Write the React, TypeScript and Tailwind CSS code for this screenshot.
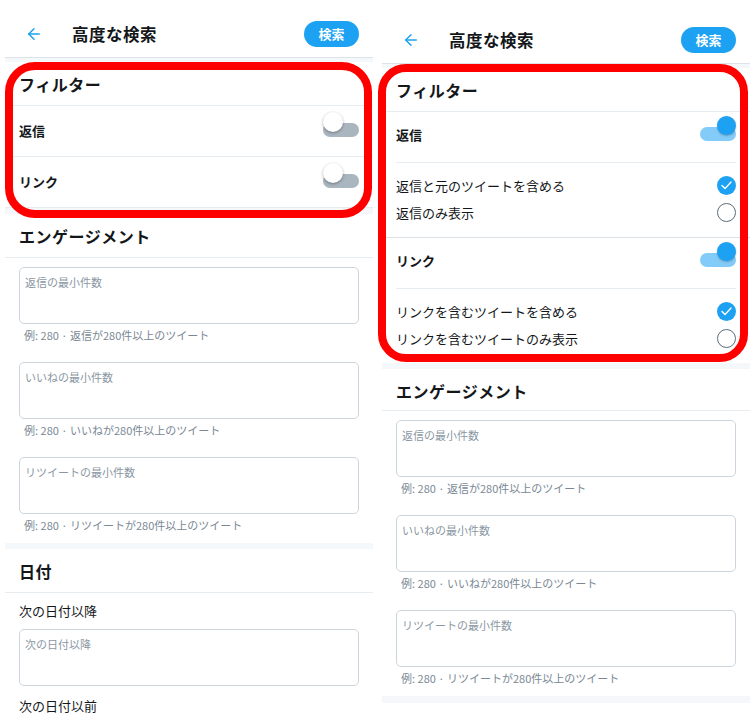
import { ArrowLeft } from "lucide-react"

// Twitter mobile "advanced search" — two states side by side, with red highlight frames

function Header({ top }: { top: string }) {
  return (
    <div className={`${top} border-b border-[#dde3e8]`}>
      <div className="h-[46px] flex items-center px-[14px]">
        <ArrowLeft className="w-[18px] h-[18px] text-[#1da1f2] ml-[6px]" strokeWidth={2} />
        <div className="ml-[29px] text-[16.5px] font-bold text-[#14171a] tracking-[0.5px]">高度な検索</div>
        <button className="ml-auto w-[55px] h-[26px] rounded-full bg-[#1da1f2] text-white text-[13px] font-bold">
          検索
        </button>
      </div>
    </div>
  )
}

function Band({ h = "h-[6px]" }: { h?: string }) {
  return <div className={`${h} bg-[#f5f8fa]`} />
}

function SectionTitle({ children, cls = "h-[44px]" }: { children: React.ReactNode; cls?: string }) {
  return (
    <div className={`${cls} flex items-center px-[14px] border-b border-[#e6ecf0] text-[16px] font-bold text-[#14171a] tracking-[0.5px]`}>
      {children}
    </div>
  )
}

function Toggle({ on }: { on: boolean }) {
  return (
    <div className="relative w-[36px] h-[25px] mb-[14px]">
      <div className={`absolute left-0 right-0 bottom-0 h-[14px] rounded-full ${on ? "bg-[#83cbf8]" : "bg-[#a9b5bf]"}`} />
      {on ? (
        <div className="absolute right-0 top-0 w-[19px] h-[19px] rounded-full bg-[#1da1f2] shadow-[0_1px_2px_rgba(0,0,0,0.25)]" />
      ) : (
        <div className="absolute left-0 top-0 w-[20px] h-[20px] rounded-full bg-white shadow-[0_1px_3px_rgba(0,0,0,0.35)]" />
      )}
    </div>
  )
}

function ToggleRow({ label, on, indent }: { label: string; on: boolean; indent?: boolean }) {
  if (indent) {
    return (
      <div className="h-[51px] px-[14px]">
        <div className="h-full pb-[4px] flex items-center justify-between border-b border-[#e6ecf0]">
          <span className="text-[13px] font-semibold text-[#14171a]">{label}</span>
          <Toggle on={on} />
        </div>
      </div>
    )
  }
  return (
    <div className="h-[51px] flex items-center justify-between px-[14px] border-b border-[#e6ecf0]">
      <span className="text-[13px] font-semibold text-[#14171a]">{label}</span>
      <Toggle on={on} />
    </div>
  )
}

function Radio({ checked }: { checked: boolean }) {
  if (checked) {
    return (
      <div className="w-[19px] h-[19px] rounded-full bg-[#1da1f2] flex items-center justify-center">
        <svg width="11" height="9" viewBox="0 0 11 9" fill="none">
          <path d="M1 4.6 L4 7.6 L10 1" stroke="white" strokeWidth="1.4" strokeLinecap="round" strokeLinejoin="round" />
        </svg>
      </div>
    )
  }
  return <div className="w-[19px] h-[19px] rounded-full border-[1.5px] border-[#5b6b78]" />
}

function Options({ items, border }: { items: [string, boolean][]; border?: boolean }) {
  return (
    <div className={`pt-[9px] pb-[11px] ${border ? "border-b border-[#dbe2e7]" : ""}`}>
      {items.map(([t, c]) => (
        <div key={t} className="h-[27px] flex items-center justify-between px-[14px]">
          <span className="text-[13px] text-[#14171a]">{t}</span>
          <Radio checked={c} />
        </div>
      ))}
    </div>
  )
}

function Field({ placeholder, hint, last }: { placeholder: string; hint: string; last?: boolean }) {
  return (
    <div className={last ? "" : "mb-[19px]"}>
      <div className="h-[57px] rounded-[5px] border border-[#cdd5dc] px-[5px] pt-[6px] text-[11px] leading-[16px] text-[#8a97a3]">
        {placeholder}
      </div>
      <div className="mt-[3px] pl-[5px] text-[11px] leading-[16px] text-[#7a8894]">{hint}</div>
    </div>
  )
}

function Engagement({ pt }: { pt: string }) {
  return (
    <div className={`px-[14px] ${pt} pb-[10px]`}>
      <Field placeholder="返信の最小件数" hint="例: 280 · 返信が280件以上のツイート" />
      <Field placeholder="いいねの最小件数" hint="例: 280 · いいねが280件以上のツイート" />
      <Field placeholder="リツイートの最小件数" hint="例: 280 · リツイートが280件以上のツイート" last />
    </div>
  )
}

function LeftPhone() {
  return (
    <div className="w-[368px] bg-white">
      <Header top="pt-[11px]" />
      <Band h="h-[4px]" />
      <SectionTitle>フィルター</SectionTitle>
      <ToggleRow label="返信" on={false} />
      <ToggleRow label="リンク" on={false} />
      <Band />
      <SectionTitle>エンゲージメント</SectionTitle>
      <Engagement pt="pt-[9px]" />
      <Band />
      <SectionTitle>日付</SectionTitle>
      <div className="px-[14px] pt-[9px]">
        <div className="text-[13px] leading-[18px] text-[#14171a]">次の日付以降</div>
        <div className="mt-[9px] h-[57px] rounded-[5px] border border-[#cdd5dc] px-[5px] pt-[6px] text-[11px] leading-[16px] text-[#8a97a3]">
          次の日付以降
        </div>
        <div className="mt-[11px] text-[13px] leading-[18px] text-[#14171a]">次の日付以前</div>
      </div>
    </div>
  )
}

function RightPhone() {
  return (
    <div className="w-[368px] bg-white">
      <Header top="pt-[17px]" />
      <Band h="h-[4px]" />
      <SectionTitle>フィルター</SectionTitle>
      <ToggleRow label="返信" on indent />
      <Options
        border
        items={[
          ["返信と元のツイートを含める", true],
          ["返信のみ表示", false],
        ]}
      />
      <ToggleRow label="リンク" on indent />
      <Options
        items={[
          ["リンクを含むツイートを含める", true],
          ["リンクを含むツイートのみ表示", false],
        ]}
      />
      <Band />
      <SectionTitle cls="h-[42px] pt-[2px]">エンゲージメント</SectionTitle>
      <Engagement pt="pt-[9px]" />
      <Band h="h-[7px]" />
    </div>
  )
}

export default function App() {
  return (
    <div className="relative w-[756px] h-[720px] overflow-hidden bg-white font-['Noto_Sans_CJK_JP',sans-serif]">
      <div className="flex gap-[9px] pl-[5px]">
        <LeftPhone />
        <RightPhone />
      </div>

      {/* highlight frames */}
      <div className="absolute left-[5px] top-[62px] w-[367px] h-[156px] border-[8px] border-[#ff0000] rounded-[30px] pointer-events-none" />
      <div className="absolute left-[378px] top-[64px] w-[370px] h-[298px] border-[8px] border-[#ff0000] rounded-[28px] pointer-events-none" />
    </div>
  )
}
